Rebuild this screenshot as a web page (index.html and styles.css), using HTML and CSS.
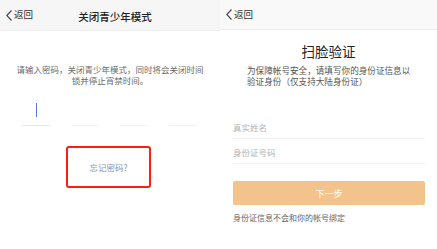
FILE: index.html
```html
<!DOCTYPE html>
<html lang="zh-CN">
<head>
<meta charset="utf-8">
<link rel="stylesheet" href="styles.css">
</head>
<body>
<div class="page">
  <section class="screen left">
    <header class="bar bar-left">
      <div class="back">
        <svg class="chev" width="6" height="11" viewBox="0 0 6 11"><polyline points="5.5,0.5 0.8,5.5 5.5,10.5" fill="none" stroke="#444" stroke-width="1.1"/></svg>
        <span>返回</span>
      </div>
      <div class="title">关闭青少年模式</div>
    </header>
    <div class="intro">
      <span class="line">请输入密码，关闭青少年模式，同时将会关闭时间</span>
      <span class="line">锁并停止宵禁时间。</span>
    </div>
    <div class="code">
      <div class="cell active"><span class="cursor"></span></div>
      <div class="cell"></div>
      <div class="cell"></div>
      <div class="cell"></div>
    </div>
    <div class="forgot-wrap">
      <div class="forgot">忘记密码?</div>
    </div>
  </section>
  <section class="screen right">
    <header class="bar bar-right">
      <div class="back">
        <svg class="chev" width="6" height="11" viewBox="0 0 6 11"><polyline points="5.5,0.5 0.8,5.5 5.5,10.5" fill="none" stroke="#444" stroke-width="1.1"/></svg>
        <span>返回</span>
      </div>
    </header>
    <h1 class="face-title">扫脸验证</h1>
    <div class="desc">
      <span class="dline">为保障帐号安全，请填写你的身份证信息以</span>
      <span class="dline">验证身份（仅支持大陆身份证）</span>
    </div>
    <div class="form">
      <div class="field">真实姓名</div>
      <div class="field">身份证号码</div>
      <div class="btn">下一步</div>
      <div class="note">身份证信息不会和你的帐号绑定</div>
    </div>
  </section>
</div>
</body>
</html>
```
FILE: styles.css
```css
* { box-sizing: border-box; margin: 0; padding: 0; }
html, body { width: 437px; height: 249px; overflow: hidden; background: #fff; }
body { font-family: "Noto Sans CJK SC", "Noto Sans", sans-serif; color: #333; }
.page { display: flex; width: 437px; height: 249px; }
.screen { display: flex; flex-direction: column; height: 249px; background: #fff; }
.left { width: 220px; }
.right { width: 217px; }

.bar { position: relative; display: flex; align-items: center; }
.bar-left { height: 31px; background: #f6f6f6; border-bottom: 1px solid #efefef; padding-left: 6px; }
.bar-right { height: 30px; background: #f9f9f9; border-bottom: 1px solid #eeeeee; padding-left: 6px; }
.back { display: flex; align-items: center; gap: 2px; font-size: 9.5px; color: #333; line-height: 1; }
.chev { display: block; }
.title { position: absolute; left: 0; right: 0; top: 0; bottom: 0; display: flex; align-items: center; justify-content: center; font-size: 10.5px; color: #222; font-weight: 500; pointer-events: none; padding-left: 10px; padding-top: 2px; }

.intro { margin-top: 33px; display: flex; flex-direction: column; align-items: center; font-size: 8.5px; color: #6a6a6a; }
.line { display: block; height: 11px; line-height: 11px; white-space: nowrap; }
.code { display: flex; gap: 21px; margin-top: 16px; padding-left: 22px; }
.cell { width: 28px; height: 24px; border-bottom: 1.5px solid #f2f2f2; display: flex; align-items: flex-start; justify-content: center; }
.cell.active { border-bottom-color: #f3e2c6; }
.cursor { display: block; width: 1px; height: 14px; margin-top: 1px; background: #5578e6; margin-left: 1px; }
.forgot-wrap { display: flex; padding-left: 66px; margin-top: 20px; }
.forgot { width: 85px; height: 42px; border: 2px solid #fb1f12; border-radius: 3px; display: flex; align-items: center; justify-content: center; font-size: 8.5px; color: #8696ae; }

.face-title { margin-top: 14px; text-align: center; font-size: 13.5px; line-height: 15px; font-weight: 400; color: #222; }
.desc { margin-top: 6px; padding-left: 27px; display: flex; flex-direction: column; font-size: 8.6px; color: #555; }
.dline { display: block; height: 10.5px; line-height: 10.5px; white-space: nowrap; }
.form { display: flex; flex-direction: column; padding: 0 12px 0 13px; margin-top: 28px; }
.field { height: 25px; border-bottom: 1px solid #f2f2f2; font-size: 8.5px; color: #b4b4b4; display: flex; align-items: center; padding-top: 1px; }
.field + .field { padding-top: 2px; }
.btn { margin-top: 17px; height: 24px; background: #f4c38b; border-radius: 2px; display: flex; align-items: center; justify-content: center; font-size: 9px; color: #fff; }
.note { margin-top: 8px; font-size: 8px; line-height: 10px; color: #666; }
```
